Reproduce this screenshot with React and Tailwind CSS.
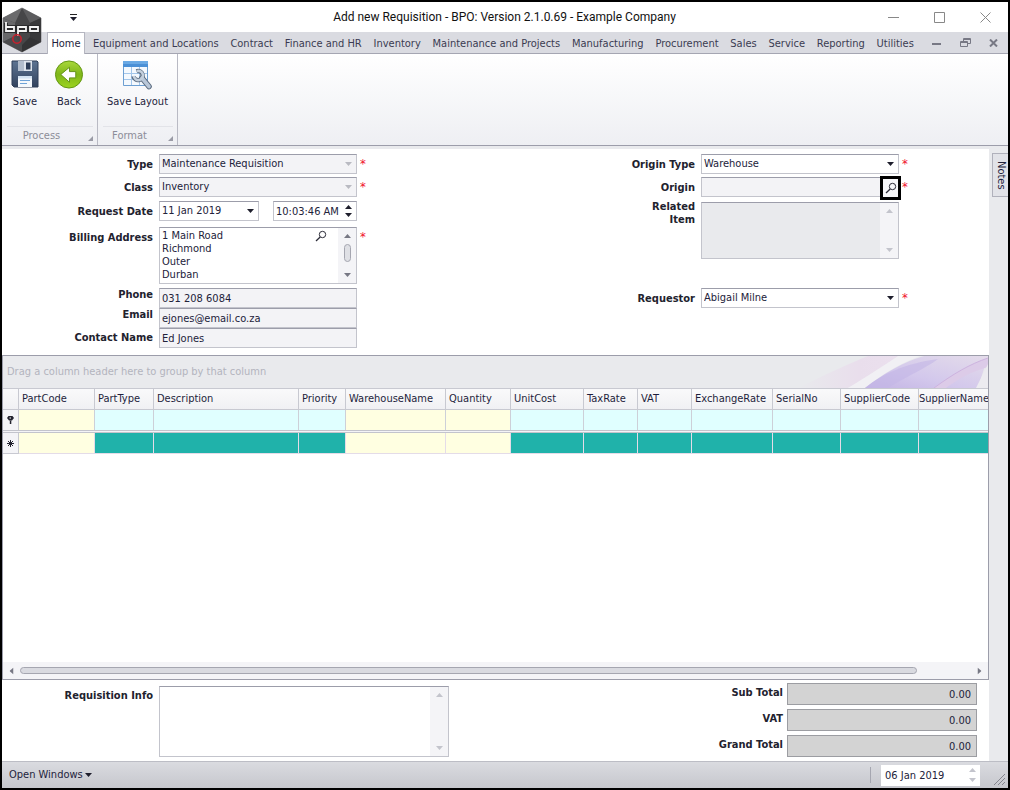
import clsx from 'clsx';

const TABS = [
  'Equipment and Locations',
  'Contract',
  'Finance and HR',
  'Inventory',
  'Maintenance and Projects',
  'Manufacturing',
  'Procurement',
  'Sales',
  'Service',
  'Reporting',
  'Utilities',
];

const COLUMNS = [
  { name: 'PartCode', width: 'w-[76px]', required: true },
  { name: 'PartType', width: 'w-[59px]' },
  { name: 'Description', width: 'w-[145px]' },
  { name: 'Priority', width: 'w-[47px]' },
  { name: 'WarehouseName', width: 'w-[100px]', required: true },
  { name: 'Quantity', width: 'w-[65px]', required: true },
  { name: 'UnitCost', width: 'w-[73px]' },
  { name: 'TaxRate', width: 'w-[54px]' },
  { name: 'VAT', width: 'w-[54px]' },
  { name: 'ExchangeRate', width: 'w-[81px]' },
  { name: 'SerialNo', width: 'w-[68px]' },
  { name: 'SupplierCode', width: 'w-[78px]' },
  { name: 'SupplierName', width: '' },
];

const TOTALS = ['Sub Total', 'VAT', 'Grand Total'];

const BOX = 'block w-full border border-[#c3c4cc] border-t-[#9c9daa] px-[2px] outline-none';

function Arrow({ dir = 'down', className = 'text-[#1e1e2c]' }) {
  const rotation = { down: '', up: 'rotate-180', left: 'rotate-90', right: '-rotate-90' }[dir];
  return (
    <svg viewBox="0 0 7 4" className={clsx('h-1 w-[7px] shrink-0', rotation, className)} aria-hidden="true">
      <path d="M0 0h7L3.5 4z" fill="currentColor" />
    </svg>
  );
}

function SearchIcon() {
  return (
    <svg viewBox="0 0 12 12" className="size-3" fill="none" stroke="#2c2c38" aria-hidden="true">
      <circle cx="7.5" cy="4.500" r="3.200" strokeWidth="1" />
      <path d="M5.200 7 1 11" strokeWidth="1.300" />
    </svg>
  );
}

function Logo() {
  return (
    <svg viewBox="0 0 40 46" className="absolute left-0 top-[5px] h-[46px] w-10" aria-label="bpo">
      <path d="M20 1 39 11v24L20 45 1 35V11z" fill="#464648" stroke="#7c7c7e" strokeWidth=".8" />
      <path d="M20 1 39 11 28 16 20 1z" fill="#5c5c5e" />
      <path d="M20 1 1 11l12 5z" fill="#6a6a6c" />
      <path d="M1 11v24l12-6V16z" fill="#68686a" />
      <path d="M39 11v24l-11-5V16z" fill="#39393b" />
      <path d="M20 45l19-10-11-5-8 8z" fill="#333335" />
      <path d="M20 38v7L1 35l12-6z" fill="#4a4a4c" />
      <g fill="#3a3a3c" stroke="#2c2c2e" strokeWidth="4">
        <path d="M4 16v8h8v-4H4M16 29v-9h8v4h-8M28 20h8v4h-8z" />
      </g>
      <g fill="none" stroke="#f6f6f6" strokeWidth="1.800">
        <path d="M4 15v9h8v-4H4M16 29v-9h8v4h-8M28 20h8v4h-8z" />
      </g>
      <circle cx="15" cy="32" r="4.200" fill="none" stroke="#c9202c" strokeWidth="1.500" />
    </svg>
  );
}

function SaveIcon() {
  return (
    <svg viewBox="0 0 28 28" className="size-7" aria-hidden="true">
      <defs>
        <linearGradient id="disk" x1="0" y1="0" x2="0" y2="1">
          <stop offset="0" stopColor="#5d7492" />
          <stop offset="1" stopColor="#33435e" />
        </linearGradient>
      </defs>
      <path d="M1 1h25l1 1v25H3l-2-2z" fill="url(#disk)" stroke="#2f3f58" />
      <path d="M7 1h14v10H7z" fill="#dfe5ed" />
      <path d="M7 1h6v10H7z" fill="#b3becd" />
      <path d="M15 2.500h4.500v7H15z" fill="#2d3d57" />
      <path d="M7 16h14v11H7z" fill="#f4f8fc" />
      <path d="M7 16h14v2.500H7z" fill="#d4e3f2" />
      <path d="M9 20.500h10M9 23.500h7" stroke="#6ea3d8" />
    </svg>
  );
}

function BackIcon() {
  return (
    <svg viewBox="0 0 30 30" className="h-[29px] w-[30px]" aria-hidden="true">
      <defs>
        <linearGradient id="ball" x1="0" y1="0" x2="0" y2="1">
          <stop offset="0" stopColor="#a9d83c" />
          <stop offset="0.5" stopColor="#7fb619" />
          <stop offset="1" stopColor="#9cd420" />
        </linearGradient>
      </defs>
      <circle cx="15" cy="15" r="14" fill="url(#ball)" stroke="#5f9310" />
      <path d="M6.500 15l9-7.500v4.500h6.500v6.500h-6.500v4.500z" fill="#fff" stroke="#5f8f14" strokeWidth="1" />
    </svg>
  );
}

function LayoutIcon() {
  return (
    <svg viewBox="0 0 30 30" className="size-[30px]" aria-hidden="true">
      <path d="M1.500 1.500h24v24h-24z" fill="#f4f9fe" stroke="#6d9fd2" />
      <path d="M1 1h25v6H1z" fill="#4b90d6" />
      <path d="M1 1h25v3H1z" fill="#6aa9e4" />
      <path d="M9.500 7v18M17.500 7v18M2 13.500h23M2 19.500h23" stroke="#a3c6ea" />
      <g fill="none" strokeLinecap="round">
        <path d="M20 18l7 8.500" stroke="#5a6a7e" strokeWidth="5.600" />
        <path d="M14.500 11.200a4.600 4.600 0 1 1-3 5" stroke="#5a6a7e" strokeWidth="4.400" strokeLinecap="butt" />
        <path d="M20 18l7 8.500" stroke="#b9c7d8" strokeWidth="3.600" />
        <path d="M14.800 11.200a4.600 4.600 0 1 1-3 4.700" stroke="#c3cfdc" strokeWidth="2.600" strokeLinecap="butt" />
      </g>
    </svg>
  );
}

function RibbonButton({ icon, children }) {
  return (
    <button type="button" className="flex h-[50px] flex-col items-center justify-between text-[#1e1e3c]">
      {icon}
      <span className="whitespace-nowrap leading-4">{children}</span>
    </button>
  );
}

function RibbonGroup({ title, className, children }) {
  return (
    <section className={clsx('flex flex-col justify-between border-r border-[#b9bac4] pt-[6px]', className)}>
      <div className="flex">{children}</div>
      <div className="ml-[5px] mr-1 flex h-[19px] items-center border-t border-[#e2e3e8] text-[#8c8d98]">
        <span className="mr-3 flex-1 text-center">{title}</span>
        <svg viewBox="0 0 5 5" className="mt-1 size-[5px]" aria-hidden="true">
          <path d="M5 0v5H0z" fill="#9a9ba6" />
        </svg>
      </div>
    </section>
  );
}

function TitleBar() {
  return (
    <div className="flex h-[30px] items-center bg-white text-[#111]">
      <button type="button" aria-label="Customize toolbar" className="ml-[67px] flex w-2 flex-col items-center gap-0.5">
        <span className="h-px w-[7px] bg-[#222]" />
        <Arrow />
      </button>
      <h1 className="flex-1 pl-11 text-center font-[Roboto,sans-serif] text-[12px]">
        Add new Requisition - BPO: Version 2.1.0.69 - Example Company
      </h1>
      <div className="flex gap-[35px] pr-[17px] text-[#888]">
        <button type="button" aria-label="Minimize">
          <svg viewBox="0 0 11 11" className="size-[11px]" stroke="currentColor"><path d="M0 5.500h11" /></svg>
        </button>
        <button type="button" aria-label="Maximize">
          <svg viewBox="0 0 11 11" className="size-[11px]" fill="none" stroke="currentColor"><path d="M.5.5h10v10H.5z" /></svg>
        </button>
        <button type="button" aria-label="Close">
          <svg viewBox="0 0 11 11" className="size-[11px]" stroke="currentColor"><path d="M.5.5l10 10M10.500.5l-10 10" /></svg>
        </button>
      </div>
    </div>
  );
}

function TabBar() {
  return (
    <nav className="flex h-[22px] border-b border-[#a5a6b2] bg-[#dadbe1] pl-[45px] text-[#3b3b52]">
      <a href="#home" className="-mb-px w-[38px] border-x border-t border-[#b5b6c0] bg-white text-center leading-[22px] text-[#1e1e3c]">
        Home
      </a>
      <div className="flex flex-1 justify-between whitespace-nowrap pl-2 pr-[18px] leading-6">
        {TABS.map((tab) => (
          <a key={tab} href="#tab">{tab}</a>
        ))}
      </div>
      <div className="flex items-center gap-[18px] pr-[10px] text-[#777884]">
        <button type="button" aria-label="Minimize child window">
          <svg viewBox="0 0 10 10" className="size-[10px]"><path d="M0 5h9v2H0z" fill="currentColor" /></svg>
        </button>
        <button type="button" aria-label="Restore child window">
          <svg viewBox="0 0 11 9" className="h-[9px] w-[11px]" fill="none" stroke="currentColor">
            <path d="M3.500 3V.5h7v5H8M3 1.500h8" />
            <path d="M.5 3.500h7v5h-7zM0 4.500h8" />
          </svg>
        </button>
        <button type="button" aria-label="Close child window">
          <svg viewBox="0 0 9 8" className="h-2 w-[9px]" stroke="currentColor" strokeWidth="2"><path d="M1 .5l7 7M8 .5l-7 7" /></svg>
        </button>
      </div>
    </nav>
  );
}

function Row({ id, label, required, labelClass = '-mb-0.5 leading-[22px]', className, children }) {
  return (
    <div className={clsx('flex', className)}>
      <label htmlFor={id} className={clsx('w-[151px] shrink-0 text-right font-bold text-[#22222e]', labelClass)}>
        {label}
      </label>
      <div className="ml-[6px] w-[198px] shrink-0">{children}</div>
      <span className="ml-[3px] w-2 text-[13px] leading-5 text-[#f0102a]">{required && '*'}</span>
    </div>
  );
}

function SelectBox({ id, value, disabled }) {
  return (
    <div className="relative">
      <select
        id={id}
        disabled={disabled}
        className={clsx(BOX, 'h-5 appearance-none opacity-100', disabled ? 'bg-[#f3f3f6]' : 'bg-white')}
      >
        <option>{value}</option>
      </select>
      <span className="pointer-events-none absolute inset-y-0 right-[5px] flex items-center">
        <Arrow className={disabled ? 'text-[#b9bac2]' : 'text-[#1e1e2c]'} />
      </span>
    </div>
  );
}

function ScrollStrip({ active }) {
  const color = active ? 'text-[#777884]' : 'text-[#c3c4cc]';
  return (
    <div className="absolute inset-y-px right-px flex w-[18px] flex-col items-center justify-between bg-[#f4f4f7] py-[6px]">
      <Arrow dir="up" className={color} />
      {active && <span className="mb-[5px] h-[18px] w-[7px] rounded-full border border-[#a5a6b0] bg-[#dfe0e5]" />}
      <Arrow className={color} />
    </div>
  );
}

function LeftFields() {
  return (
    <div className="flex flex-col">
      <Row id="type" label="Type" required>
        <SelectBox id="type" value="Maintenance Requisition" disabled />
      </Row>
      <Row id="class" label="Class" required className="mt-[3px]">
        <SelectBox id="class" value="Inventory" disabled />
      </Row>
      <Row id="date" label="Request Date" className="mt-1">
        <div className="flex justify-between">
          <div className="w-[100px]">
            <SelectBox id="date" value="11 Jan 2019" />
          </div>
          <div className="relative w-[84px]">
            <input aria-label="Request time" defaultValue="10:03:46 AM" className={clsx(BOX, 'h-5 bg-white')} />
            <span className="absolute inset-y-px right-px flex w-[15px] flex-col items-center justify-center gap-1 bg-white">
              <Arrow dir="up" />
              <Arrow />
            </span>
          </div>
        </div>
      </Row>
      <Row id="address" label="Billing Address" required className="mt-[6px]">
        <div className="relative">
          <textarea
            id="address"
            defaultValue={'1 Main Road\nRichmond\nOuter\nDurban'}
            className={clsx(BOX, 'h-[57px] resize-none overflow-hidden bg-white pt-px leading-[13px]')}
          />
          <button type="button" aria-label="Find address" className="absolute right-[30px] top-[3px]">
            <SearchIcon />
          </button>
          <ScrollStrip active />
        </div>
      </Row>
      <Row id="phone" label="Phone" labelClass="leading-[13px]" className="mt-1">
        <input id="phone" readOnly defaultValue="031 208 6084" className={clsx(BOX, 'h-5 bg-[#f3f3f6]')} />
      </Row>
      <Row id="email" label="Email" labelClass="leading-[13px]">
        <input id="email" readOnly defaultValue="ejones@email.co.za" className={clsx(BOX, 'h-5 bg-[#f3f3f6]')} />
      </Row>
      <Row id="contact" label="Contact Name" labelClass="leading-5">
        <input id="contact" readOnly defaultValue="Ed Jones" className={clsx(BOX, 'h-5 bg-[#f3f3f6]')} />
      </Row>
    </div>
  );
}

function RightFields() {
  return (
    <div className="flex flex-col">
      <Row id="origin-type" label="Origin Type" required>
        <SelectBox id="origin-type" value="Warehouse" />
      </Row>
      <Row id="origin" label="Origin" required className="mt-[3px]">
        <div className="relative">
          <input id="origin" readOnly className={clsx(BOX, 'h-5 bg-[#f3f3f6]')} />
          <button
            type="button"
            aria-label="Find origin"
            className="absolute -right-[2px] -top-[1px] flex h-6 w-[21px] items-center justify-center border-[3px] border-black bg-[#f7f7f9]"
          >
            <SearchIcon />
          </button>
        </div>
      </Row>
      <Row
        id="related"
        label={<>Related<br />Item</>}
        labelClass="-mt-[2px] leading-[13px]"
        className="mt-[5px]"
      >
        <div className="relative">
          <textarea id="related" readOnly className={clsx(BOX, 'h-[57px] resize-none overflow-hidden bg-[#e9eaed]')} />
          <ScrollStrip />
        </div>
      </Row>
      <Row id="requestor" label="Requestor" required className="mt-[29px]">
        <SelectBox id="requestor" value="Abigail Milne" />
      </Row>
    </div>
  );
}

function Swirl() {
  return (
    <svg viewBox="0 0 190 32" preserveAspectRatio="none" className="h-8 w-[190px]" aria-hidden="true">
      <defs>
        <linearGradient id="haze" x1="0" y1="0" x2="1" y2="0">
          <stop offset="0" stopColor="#e9eaed" />
          <stop offset="0.6" stopColor="#e9deec" />
          <stop offset="1" stopColor="#ebe0ee" />
        </linearGradient>
        <linearGradient id="petal" x1="0" y1="1" x2="1" y2="0">
          <stop offset="0" stopColor="#c3b4e4" />
          <stop offset="0.4" stopColor="#d3c8ec" />
          <stop offset="1" stopColor="#e4dcea" />
        </linearGradient>
      </defs>
      <path d="M0 32C20 22 50 8 70 0h32C85 10 65 24 50 32z" fill="url(#haze)" />
      <path d="M50 32C70 20 88 8 100 0h22C100 8 82 20 67 32z" fill="#f1f0f4" />
      <path d="M67 32C85 18 105 6 126 0h64L180 32z" fill="url(#petal)" />
      <path d="M67 32C85 18 105 8 140 3c-12 9-32 18-50 29z" fill="#c3b5e6" opacity=".6" />
      <path d="M136 32C155 18 172 8 190 2v9c-18 5-30 12-42 21z" fill="#dccbe8" />
      <path d="M136 32C155 18 172 8 190 2" fill="none" stroke="#cdb3df" />
      <path d="M178 32 190 8v24z" fill="#ecebf0" />
    </svg>
  );
}

function PartsGrid() {
  return (
    <div className="flex flex-1 flex-col overflow-hidden border border-[#9c9daa] bg-white">
      <div className="flex h-8 items-center justify-between bg-[#e9eaed] pl-1 text-[#b3b4be]">
        <span>Drag a column header here to group by that column</span>
        <Swirl />
      </div>
      <table className="w-full table-fixed border-separate border-spacing-0">
        <thead>
          <tr className="bg-linear-to-b from-[#fafafb] to-[#f0f0f3] text-left text-[#1e1e3c]">
            <th className="h-[22px] w-4 border-y border-r border-[#c8c9d1] p-0" aria-label="Row state" />
            {COLUMNS.map((col) => (
              <th
                key={col.name}
                className={clsx('h-[22px] whitespace-nowrap border-y border-r border-[#c8c9d1] p-0 pl-[3px] font-normal last:border-r-0 last:pl-0', col.width)}
              >
                {col.name}
              </th>
            ))}
          </tr>
        </thead>
        <tbody>
          <tr>
            <td className="h-[20px] border-r border-[#c8c9d1] bg-[#f4f4f7] p-0">
              <svg viewBox="0 0 7 9" className="mx-auto h-[9px] w-[7px]" aria-label="Filter row">
                <path d="M1.500 0h4L7 2 5 4.500H2L0 2z" fill="#22222e" />
                <path d="M2.800 4.500h1.500V8H2.800z" fill="#22222e" />
                <path d="M2.500 1.500h1.500v1H2.500z" fill="#fff" />
              </svg>
            </td>
            {COLUMNS.map((col) => (
              <td
                key={col.name}
                className={clsx('border-r border-[#cdd0d8] p-0 last:border-r-0', col.required ? 'bg-[#ffffe1]' : 'bg-[#e0ffff]')}
              >
                <input aria-label={`Filter ${col.name}`} className="block h-5 w-full px-1 outline-none" />
              </td>
            ))}
          </tr>
          <tr>
            <td colSpan={COLUMNS.length + 1} className="h-[3px] border-y border-[#c3c4cc] bg-[#f4f4f7] p-0" />
          </tr>
          <tr>
            <td className="h-[21px] border-b border-r border-[#c8c9d1] bg-[#f4f4f7] p-0">
              <svg viewBox="0 0 7 7" className="mx-auto size-[7px]" stroke="#22222e" aria-label="New row">
                <path d="M3.500 0v7M0 3.500h7M1 1l5 5M6 1 1 6" />
              </svg>
            </td>
            {COLUMNS.map((col) => (
              <td
                key={col.name}
                className={clsx('border-b border-r border-[#e4dce8] p-0 last:border-r-0', col.required ? 'bg-[#ffffe1]' : 'bg-[#20b2aa]')}
              >
                <input aria-label={`New ${col.name}`} className="block h-5 w-full px-1 outline-none" />
              </td>
            ))}
          </tr>
        </tbody>
      </table>
      <div className="mt-auto flex h-[17px] items-center bg-[#f4f4f7] px-[5px]">
        <Arrow dir="left" className="text-[#777884]" />
        <span className="ml-[5px] mr-[59px] h-[7px] flex-1 rounded-full border border-[#a5a6b0] bg-[#d9dae0]" />
        <Arrow dir="right" className="text-[#777884]" />
      </div>
    </div>
  );
}

function Footer() {
  return (
    <div className="flex justify-between pb-1 pr-[12px] pt-[3px]">
      <div className="flex pt-[3px]">
        <label htmlFor="info" className="w-[151px] text-right font-bold leading-5 text-[#22222e]">Requisition Info</label>
        <div className="relative ml-[6px] w-[290px]">
          <textarea id="info" className={clsx(BOX, 'h-[71px] resize-none overflow-hidden bg-white')} />
          <ScrollStrip />
        </div>
      </div>
      <div className="flex flex-col gap-1">
        {TOTALS.map((name) => (
          <div key={name} className="flex">
            <label htmlFor={name} className="mr-1 flex-1 text-right font-bold leading-5 text-[#22222e]">{name}</label>
            <input
              id={name}
              readOnly
              defaultValue="0.00"
              className="h-[22px] w-[190px] border border-[#9c9da2] bg-[#d3d3d3] px-[5px] text-right outline-none"
            />
          </div>
        ))}
      </div>
    </div>
  );
}

function StatusBar() {
  return (
    <footer className="flex h-[27px] items-center border-t border-[#bcbdc5] bg-linear-to-b from-[#dadbe0] to-[#c6c7cd] pl-[7px] pr-[3px]">
      <button type="button" className="flex items-center gap-0.5 text-[#1e1e3c]">
        Open Windows <Arrow />
      </button>
      <span className="ml-auto mr-[10px] h-4 w-px bg-[#a5a6b0]" />
      <div className="relative w-[99px]">
        <input aria-label="Working date" defaultValue="06 Jan 2019" className="block h-[21px] w-full bg-white px-1 outline-none" />
        <span className="absolute inset-y-0 right-1 flex flex-col justify-center gap-[6px]">
          <Arrow dir="up" className="text-[#c3c4cc]" />
          <Arrow className="text-[#c3c4cc]" />
        </span>
      </div>
      <svg viewBox="0 0 11 11" className="ml-[14px] mt-[9px] size-[11px]" stroke="#85868f" aria-hidden="true">
        <path d="M0 11 11 0M4 11l7-7M8 11l3-3" />
      </svg>
    </footer>
  );
}

export default function App() {
  return (
    <div className="flex min-h-screen flex-col border-2 border-black bg-white font-['DejaVu_Sans_Condensed','Noto_Sans',sans-serif] text-[11px] text-[#22223a]">
      <header className="relative">
        <TitleBar />
        <TabBar />
        <Logo />
        <div className="flex h-[92px] border-b border-[#9c9daa] bg-linear-to-b from-white to-[#eeeff3]">
          <RibbonGroup title="Process" className="w-24">
            <div className="flex w-full gap-[15px] pl-[9px]">
              <RibbonButton icon={<SaveIcon />}>Save</RibbonButton>
              <RibbonButton icon={<BackIcon />}>Back</RibbonButton>
            </div>
          </RibbonGroup>
          <RibbonGroup title="Format" className="w-20">
            <div className="flex w-full justify-center">
              <RibbonButton icon={<LayoutIcon />}>Save Layout</RibbonButton>
            </div>
          </RibbonGroup>
        </div>
      </header>
      <div className="flex flex-1 border-t-[3px] border-[#e9eaed]">
        <main className="flex min-w-0 flex-1 flex-col">
          <div className="flex justify-between pb-[7px] pr-[79px] pt-[5px]">
            <LeftFields />
            <RightFields />
          </div>
          <PartsGrid />
          <Footer />
        </main>
        <aside className="w-[19px] bg-[#e9eaed] pl-[3px] pt-1">
          <button type="button" className="flex h-11 w-4 items-center justify-center border border-r-0 border-[#b0b1bb] bg-[#e2e3e8] [writing-mode:vertical-rl]">
            Notes
          </button>
        </aside>
      </div>
      <StatusBar />
    </div>
  );
}
